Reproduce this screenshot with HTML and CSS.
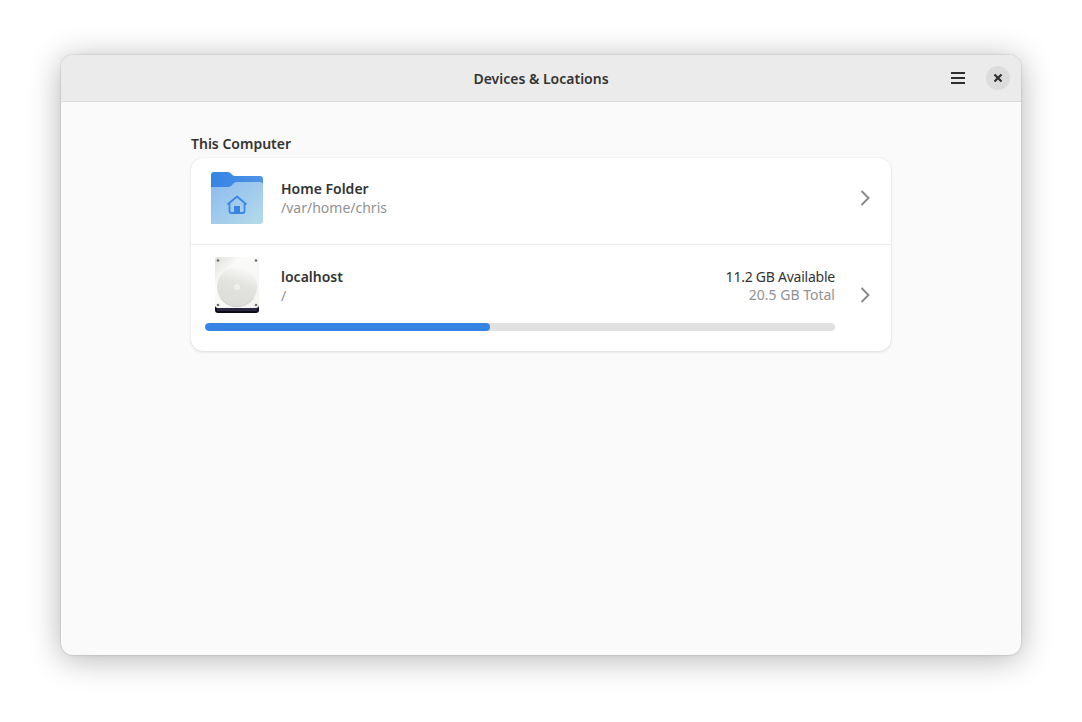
FILE: index.html
```html
<!DOCTYPE html>
<html lang="en">
<head>
    <meta charset="UTF-8">
    <meta name="viewport" content="width=device-width, initial-scale=1.0">
    <title>Devices &amp; Locations</title>
    <link rel="stylesheet" href="styles.css">
</head>
<body>
    <div class="window">
        <header class="headerbar">
            <div class="title">Devices &amp; Locations</div>
            <div class="header-buttons">
                <svg class="menu-icon" width="16" height="16" viewBox="0 0 16 16">
                    <path d="M1 2h14v2H1zM1 7h14v2H1zM1 12h14v2H1z" fill="#2e2e2e"/>
                </svg>
                <div class="close-button">
                    <svg width="12" height="12" viewBox="0 0 12 12">
                        <path d="M2.500 2.500l7 7M9.500 2.500l-7 7" stroke="#2e2e2e" stroke-width="2.200" fill="none"/>
                    </svg>
                </div>
            </div>
        </header>

        <main class="content">
            <div class="section">
                <h3 class="section-title">This Computer</h3>
                <div class="card">
                    <!-- Home folder -->
                    <div class="row row-home">
                        <svg class="row-icon" width="52" height="52" viewBox="0 0 52 52">
                            <defs>
                                <linearGradient id="folder-front" x1="0" y1="0" x2="1" y2="1">
                                    <stop offset="0" stop-color="#8dbaef"/>
                                    <stop offset="1" stop-color="#b5dbe9"/>
                                </linearGradient>
                                <linearGradient id="folder-back" x1="0" y1="0" x2="1" y2="0">
                                    <stop offset="0" stop-color="#3584e4"/>
                                    <stop offset="1" stop-color="#4f93e6"/>
                                </linearGradient>
                            </defs>
                            <path d="M0 3a3 3 0 0 1 3-3h14c3 0 4 4 7 4h25a3 3 0 0 1 3 3v14H0z" fill="url(#folder-back)"/>
                            <path d="M0 15h17c4 0 5-5 9-5h23a3 3 0 0 1 3 3v36a3 3 0 0 1-3 3H0z" fill="url(#folder-front)"/>
                            <path d="M16.500 32.500l9.500-8 9.500 8M18.500 31v8a2 2 0 0 0 2 2h11a2 2 0 0 0 2-2v-8" fill="none" stroke="#3b87e5" stroke-width="1.800" stroke-linejoin="round"/>
                            <path d="M23 34h6v7h-6z" fill="#3584e4"/>
                        </svg>
                        <div class="row-text">
                            <div class="row-title">Home Folder</div>
                            <div class="row-subtitle">/var/home/chris</div>
                        </div>
                        <svg class="chevron" width="10" height="16" viewBox="0 0 10 16">
                            <path d="M1.500 1l7 7-7 7" fill="none" stroke="#8a8a8a" stroke-width="2"/>
                        </svg>
                    </div>

                    <!-- Root disk -->
                    <div class="row row-disk">
                        <div class="disk-left">
                            <div class="disk-top">
                                <svg class="row-icon" width="48" height="58" viewBox="0 0 48 58">
                                    <defs>
                                        <linearGradient id="disk-case" x1="0" y1="0" x2="1" y2="1">
                                            <stop offset="0" stop-color="#dededa"/>
                                            <stop offset=".3" stop-color="#fbfbfa"/>
                                            <stop offset="1" stop-color="#f4f3f0"/>
                                        </linearGradient>
                                        <linearGradient id="disk-platter" x1=".7" y1="0" x2=".4" y2="1">
                                            <stop offset="0" stop-color="#fbfbfa"/>
                                            <stop offset=".45" stop-color="#e2e2df"/>
                                            <stop offset="1" stop-color="#dcdcd9"/>
                                        </linearGradient>
                                    </defs>
                                    <path d="M2 50h44v5a3 3 0 0 1-3 3H5a3 3 0 0 1-3-3z" fill="#0e0d14"/>
                                    <path d="M4 53h40v3H4z" fill="#2a2840"/>
                                    <rect x="2" y="2" width="44" height="51" rx="3" fill="url(#disk-case)"/>
                                    <circle cx="24" cy="32" r="20" fill="url(#disk-platter)"/>
                                    <path d="M7.500 43a20 20 0 0 0 33 0" fill="none" stroke="#c9c9c6" stroke-width=".7"/>
                                    <circle cx="24" cy="32" r="3" fill="#f0f0ee"/>
                                    <circle cx="5" cy="5.500" r="1.300" fill="#6d6d6d"/>
                                    <circle cx="43" cy="5.500" r="1.300" fill="#6d6d6d"/>
                                    <circle cx="5" cy="50" r="1.300" fill="#6d6d6d"/>
                                    <circle cx="43" cy="50" r="1.300" fill="#6d6d6d"/>
                                </svg>
                                <div class="row-text">
                                    <div class="row-title">localhost</div>
                                    <div class="row-subtitle">/</div>
                                </div>
                                <div class="disk-usage">
                                    <div class="available">11.2 GB Available</div>
                                    <div class="row-subtitle">20.5 GB Total</div>
                                </div>
                            </div>
                            <div class="usage-bar"><div class="usage-fill" style="width: 45.2%"></div></div>
                        </div>
                        <svg class="chevron" width="10" height="16" viewBox="0 0 10 16">
                            <path d="M1.500 1l7 7-7 7" fill="none" stroke="#8a8a8a" stroke-width="2"/>
                        </svg>
                    </div>
                </div>
            </div>
        </main>
    </div>
</body>
</html>
```

FILE: styles.css
```css
* {
    box-sizing: border-box;
}
body {
    font-family: "Noto Sans", "Open Sans", sans-serif;
    font-size: 14px;
    color: #2e2e2e;
    margin: 0;
    padding: 55px 61px 67px;
    height: 722px;
    overflow: hidden;
    background-color: #ffffff;
}
.window {
    width: 960px;
    height: 600px;
    display: flex;
    flex-direction: column;
    background-color: #fafafa;
    border-radius: 12px;
    overflow: hidden;
    box-shadow: 0 4px 32px rgba(0, 0, 0, 0.3), 0 0 2px rgba(0, 0, 0, 0.25);
}
.headerbar {
    height: 47px;
    flex: none;
    display: flex;
    align-items: center;
    justify-content: center;
    position: relative;
    background-color: #ebebeb;
    border-bottom: 1px solid #dcdcdc;
}
.title {
    font-weight: 600;
    font-size: 14px;
    color: #333333;
}
.header-buttons {
    position: absolute;
    right: 11px;
    top: 11px;
    display: flex;
    align-items: center;
    gap: 20px;
}
.close-button {
    width: 24px;
    height: 24px;
    border-radius: 50%;
    background-color: #dcdcdc;
    display: flex;
    align-items: center;
    justify-content: center;
}
.content {
    flex: 1;
    display: flex;
    justify-content: center;
    padding-top: 32px;
}
.section {
    width: 700px;
}
.section-title {
    margin: 0 0 5px;
    font-size: 14px;
    line-height: 19px;
    font-weight: 600;
    color: #333333;
}
.card {
    background-color: #ffffff;
    border-radius: 12px;
    box-shadow: 0 1px 3px rgba(0, 0, 0, 0.12), 0 0 1px rgba(0, 0, 0, 0.1);
}
.row {
    display: flex;
    align-items: center;
}
.row-home {
    height: 87px;
    padding: 0 21px 0 20px;
    border-bottom: 1px solid #ebebeb;
}
.row-home .row-text {
    margin: -6px 0 0 18px;
    flex: 1;
}
.row-home .row-icon {
    margin-top: -7px;
}
.row-home .chevron {
    margin-top: -6px;
}
.row-text {
    line-height: 19px;
}
.row-title {
    font-weight: 600;
    color: #333333;
}
.row-subtitle {
    color: #929292;
}
.row-disk {
    height: 106px;
    padding: 0 21px 0 14px;
    align-items: flex-start;
}
.disk-left {
    width: 630px;
    padding-top: 10px;
}
.disk-top {
    display: flex;
    align-items: center;
    height: 58px;
    padding-left: 8px;
}
.disk-top .row-text {
    margin: 3px 0 0 20px;
    flex: 1;
}
.disk-usage {
    text-align: right;
    line-height: 18px;
    margin-top: 3px;
}
.available {
    color: #333333;
    letter-spacing: -0.24px;
}
.usage-bar {
    height: 8px;
    margin-top: 10px;
    border-radius: 4px;
    background-color: #e1e1e1;
    overflow: hidden;
}
.usage-fill {
    height: 100%;
    border-radius: 4px;
    background-color: #3584e4;
}
.row-disk .chevron {
    margin-left: 25px;
    margin-top: 42px;
}
```
